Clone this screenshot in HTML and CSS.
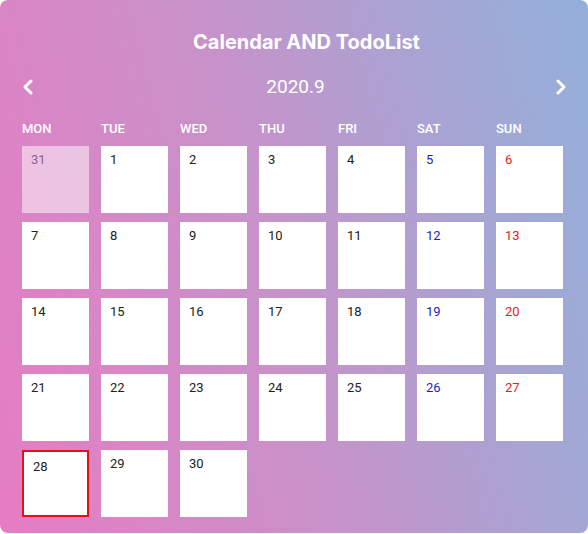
FILE: index.html
```html
<!DOCTYPE html>
<html>
<head>
<meta charset="utf-8">
<link rel="stylesheet" href="styles.css">
</head>
<body>
<div class="card">
  <h1 class="title">Calendar AND TodoList</h1>
  <div class="nav">
    <svg class="chev" width="12" height="16" viewBox="0 0 12 16"><polyline points="9,2 3,8 9,14" fill="none" stroke="#fff" stroke-width="3" stroke-linecap="round" stroke-linejoin="round"/></svg>
    <div class="month">2020.9</div>
    <svg class="chev" width="12" height="16" viewBox="0 0 12 16"><polyline points="3,2 9,8 3,14" fill="none" stroke="#fff" stroke-width="3" stroke-linecap="round" stroke-linejoin="round"/></svg>
  </div>
  <div class="weekdays">
    <span>MON</span><span>TUE</span><span>WED</span><span>THU</span><span>FRI</span><span>SAT</span><span>SUN</span>
  </div>
  <div class="grid">
    <div class="day other">31</div>
    <div class="day">1</div>
    <div class="day">2</div>
    <div class="day">3</div>
    <div class="day">4</div>
    <div class="day sat">5</div>
    <div class="day sun">6</div>
    <div class="day">7</div>
    <div class="day">8</div>
    <div class="day">9</div>
    <div class="day">10</div>
    <div class="day">11</div>
    <div class="day sat">12</div>
    <div class="day sun">13</div>
    <div class="day">14</div>
    <div class="day">15</div>
    <div class="day">16</div>
    <div class="day">17</div>
    <div class="day">18</div>
    <div class="day sat">19</div>
    <div class="day sun">20</div>
    <div class="day">21</div>
    <div class="day">22</div>
    <div class="day">23</div>
    <div class="day">24</div>
    <div class="day">25</div>
    <div class="day sat">26</div>
    <div class="day sun">27</div>
    <div class="day today">28</div>
    <div class="day">29</div>
    <div class="day">30</div>
  </div>
</div>
</body>
</html>
```
FILE: styles.css
```css
html, body {
  margin: 0;
  padding: 0;
  background: #ffffff;
}
.card {
  width: 588px;
  height: 533px;
  box-sizing: border-box;
  border-radius: 8px;
  background: linear-gradient(75deg, #e67cc4 0%, #c991c9 45%, #a8a4d3 75%, #93b0da 100%);
  padding: 28px 21px 0 22px;
  font-family: Roboto, "Liberation Sans", sans-serif;
  color: #fff;
}
.title {
  margin: 0;
  height: 28px;
  line-height: 28px;
  padding-left: 24px;
  text-align: center;
  font-family: Inter, "Liberation Sans", sans-serif;
  font-size: 20px;
  font-weight: 700;
  letter-spacing: 0px;
}
.nav {
  margin-top: 17px;
  height: 28px;
  display: flex;
  align-items: center;
  justify-content: space-between;
}
.chev {
  display: block;
}
.month {
  font-size: 19px;
  line-height: 28px;
  margin-left: 2px;
}
.weekdays {
  margin-top: 18px;
  display: grid;
  grid-template-columns: repeat(7, 67px);
  column-gap: 12px;
  font-size: 13px;
  font-weight: 500;
  line-height: 20px;
  height: 20px;
}
.grid {
  margin-top: 7px;
  display: grid;
  grid-template-columns: repeat(7, 67px);
  grid-auto-rows: 67px;
  column-gap: 12px;
  row-gap: 9px;
}
.day {
  box-sizing: border-box;
  background: #fff;
  color: #222;
  font-size: 13px;
  line-height: 18px;
  padding: 5px 9px;
}
.day.other {
  background: rgba(255, 255, 255, 0.5);
  color: rgba(60, 30, 60, 0.6);
}
.day.sat {
  color: #1d1dc8;
}
.day.sun {
  color: #e52020;
}
.day.today {
  border: 2px solid #e2111b;
  padding: 6px 9px;
}
```
